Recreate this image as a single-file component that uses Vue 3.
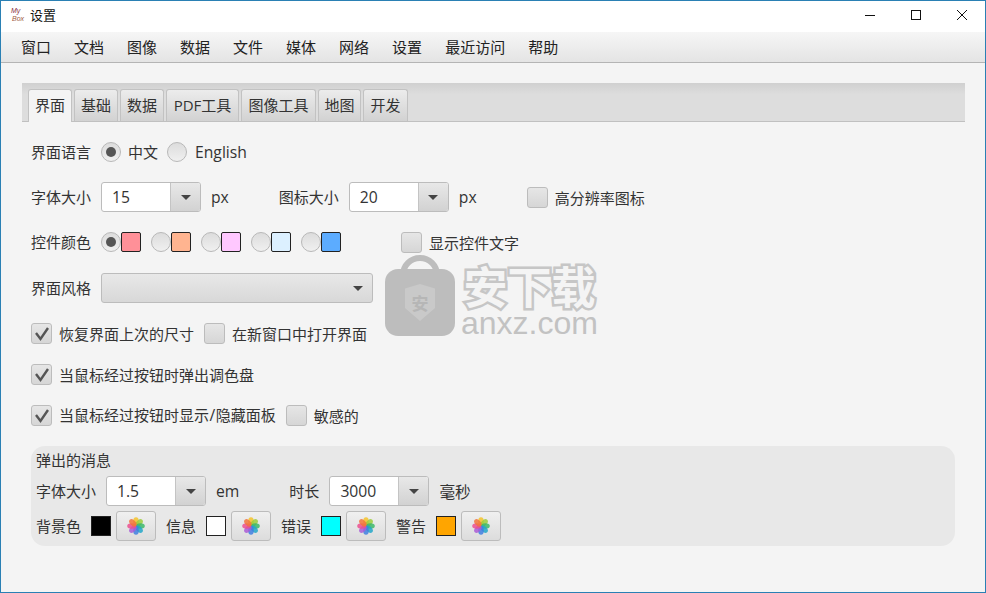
<template>
  <div class="window">
    <div class="titlebar">
      <div class="logo"><span>My</span><span class="logo-b">Box</span></div>
      <span class="title">设置</span>
      <div class="win-btns">
        <svg width="12" height="12" viewBox="0 0 12 12"><path d="M1 6.5h10" stroke="#111" fill="none" /></svg>
        <svg width="12" height="12" viewBox="0 0 12 12"><rect x="1.5" y="1.5" width="9" height="9" stroke="#111" fill="none" /></svg>
        <svg width="12" height="12" viewBox="0 0 12 12"><path d="M1 1l10 10M11 1L1 11" stroke="#111" fill="none" /></svg>
      </div>
    </div>

    <div class="menubar">
      <span v-for="m in menus" :key="m">{{ m }}</span>
    </div>

    <div class="body">
      <div class="tabs">
        <div v-for="(t, i) in tabs" :key="t" class="tab" :class="{ active: i === 0 }">{{ t }}</div>
      </div>

      <div class="content">
        <div class="row">
          <span class="lbl">界面语言</span>
          <span class="radio on"></span><span class="rtext">中文</span>
          <span class="radio"></span><span class="rtext latin">English</span>
        </div>

        <div class="row">
          <span class="lbl">字体大小</span>
          <div class="combo"><span class="val">15</span><span class="arrow"><i></i></span></div>
          <span class="unit">px</span>
          <span class="lbl second">图标大小</span>
          <div class="combo"><span class="val">20</span><span class="arrow"><i></i></span></div>
          <span class="unit">px</span>
          <span class="check hires"></span><span class="ctext">高分辨率图标</span>
        </div>

        <div class="row style-gap">
          <span class="lbl">控件颜色</span>
          <div v-for="(c, i) in colors" :key="c" class="color-opt">
            <span class="radio" :class="{ on: i === 0 }"></span>
            <span class="swatch" :style="{ background: c }"></span>
          </div>
          <span class="check show-text"></span><span class="ctext">显示控件文字</span>
        </div>

        <div class="row">
          <span class="lbl">界面风格</span>
          <div class="select"><i></i></div>
        </div>

        <div class="row tight">
          <span class="check"><svg viewBox="1 1 19 19"><path d="M5 10l4.5 6L17 5" /></svg></span>
          <span class="ctext">恢复界面上次的尺寸</span>
          <span class="check"></span><span class="ctext">在新窗口中打开界面</span>
        </div>

        <div class="row tight">
          <span class="check"><svg viewBox="1 1 19 19"><path d="M5 10l4.5 6L17 5" /></svg></span>
          <span class="ctext">当鼠标经过按钮时弹出调色盘</span>
        </div>

        <div class="row tight">
          <span class="check"><svg viewBox="1 1 19 19"><path d="M5 10l4.5 6L17 5" /></svg></span>
          <span class="ctext">当鼠标经过按钮时显示<span class="latin slash">/</span>隐藏面板</span>
          <span class="check"></span><span class="ctext">敏感的</span>
        </div>

        <div class="panel">
          <div class="panel-title">弹出的消息</div>
          <div class="panel-row">
            <span class="lbl">字体大小</span>
            <div class="combo"><span class="val">1.5</span><span class="arrow"><i></i></span></div>
            <span class="unit">em</span>
            <span class="lbl duration">时长</span>
            <div class="combo"><span class="val">3000</span><span class="arrow"><i></i></span></div>
            <span class="unit">毫秒</span>
          </div>
          <div class="panel-row">
            <template v-for="m in messages" :key="m.name">
              <span class="lbl">{{ m.name }}</span>
              <span class="msg-color" :style="{ background: m.color }"></span>
              <button class="pick">
                <svg width="18" height="18" viewBox="0 0 18 18">
                  <ellipse v-for="(p, i) in petals" :key="p" cx="9" cy="4.6" rx="2.8" ry="4.4"
                    :fill="p" fill-opacity="0.85" :transform="`rotate(${i * 45} 9 9)`" />
                </svg>
              </button>
            </template>
          </div>
        </div>
      </div>

      <div class="mark">
        <div class="bag">
          <span class="handle"></span>
          <span class="bag-body">
            <span class="shield">安</span>
          </span>
        </div>
        <div class="mark-text">
          <div class="mark-cn">安下载</div>
          <div class="mark-en">anxz.com</div>
        </div>
      </div>
    </div>
  </div>
</template>

<script setup>
const menus = ['窗口', '文档', '图像', '数据', '文件', '媒体', '网络', '设置', '最近访问', '帮助']
const tabs = ['界面', '基础', '数据', 'PDF工具', '图像工具', '地图', '开发']
const colors = ['#ff9098', '#ffb490', '#ffc8ff', '#dcf0ff', '#5cacff']
const messages = [
  { name: '背景色', color: '#000000' },
  { name: '信息', color: '#ffffff' },
  { name: '错误', color: '#00ffff' },
  { name: '警告', color: '#ffa500' }
]
const petals = ['#f5c32c', '#9ccc3c', '#3db86a', '#22a7c9', '#3f7fe0', '#a95cd6', '#ec4f8f', '#f2763a']
</script>

<style>
html, body {
  margin: 0;
  overflow: hidden;
}
</style>

<style scoped>
.window {
  position: relative;
  box-sizing: border-box;
  width: 986px;
  height: 593px;
  border: 1px solid #2a80b4;
  background: #f4f4f4;
  font-family: "Open Sans", "Noto Sans CJK SC", sans-serif;
  font-size: 15px;
  color: #333;
  overflow: hidden;
}

.titlebar {
  display: flex;
  align-items: center;
  box-sizing: border-box;
  height: 31px;
  padding: 0 0 4px 10px;
  background: #fff;
}

.logo {
  display: flex;
  flex-direction: column;
  width: 15px;
  font-family: "Liberation Sans", sans-serif;
  font-style: italic;
  font-size: 7px;
  line-height: 8px;
  color: #8a3040;
}

.logo-b {
  margin-left: 1px;
  color: #a05a40;
}

.title {
  margin-left: 4px;
  font-size: 13px;
  color: #111;
}

.win-btns {
  display: flex;
  align-items: center;
  gap: 34px;
  margin-left: auto;
  margin-right: 17px;
}

.win-btns svg {
  display: block;
}

.menubar {
  display: flex;
  align-items: center;
  gap: 23px;
  box-sizing: border-box;
  height: 31px;
  padding: 0 0 2px 20px;
  background: linear-gradient(#f6f6f6, #e4e4e4);
  border-bottom: 1px solid #b4b4b4;
  color: #222;
}

.body {
  padding: 20px 20px 0 21px;
}

.tabs {
  display: grid;
  grid-template-columns: 44px 44px 44px 73px 75px 43px 45px;
  align-items: end;
  gap: 2px;
  box-sizing: border-box;
  height: 39px;
  padding-left: 6px;
  background: linear-gradient(#d0d0d0, #dddddd 30%);
  border-bottom: 1px solid #c0c0c0;
}

.tab {
  box-sizing: border-box;
  height: 32px;
  line-height: 31px;
  text-align: center;
  border: 1px solid #c2c2c2;
  border-bottom: none;
  border-radius: 3px 3px 0 0;
  background: linear-gradient(#ececec, #d2d2d2);
  white-space: nowrap;
}

.tab.active {
  height: 33px;
  margin-bottom: -1px;
  background: #f4f4f4;
}

.content {
  padding: 15px 10px 0 9px;
}

.row {
  display: flex;
  align-items: center;
  height: 30px;
  margin-bottom: 15px;
}

.row.style-gap {
  margin-bottom: 16px;
}

.row.tight {
  margin-bottom: 11px;
}

.lbl,
.rtext {
  padding-bottom: 2px;
}

.lbl {
  margin-right: 10px;
  white-space: nowrap;
}

.latin {
  font-size: 15.7px;
}

.slash {
  padding: 0 0.5px;
}

.radio {
  position: relative;
  box-sizing: border-box;
  flex: none;
  width: 20px;
  height: 20px;
  border: 1px solid #b8b8b8;
  border-radius: 50%;
  background: linear-gradient(#dcdcdc, #f0f0f0);
}

.radio.on::after {
  content: "";
  position: absolute;
  top: 4px;
  left: 4px;
  width: 10px;
  height: 10px;
  border-radius: 50%;
  background: #555;
}

.rtext {
  margin: 0 9px 0 7px;
}

.rtext.latin {
  margin-left: 8px;
  padding-bottom: 0;
}

.combo {
  display: flex;
  box-sizing: border-box;
  width: 100px;
  height: 30px;
  border: 1px solid #bcbcbc;
  border-radius: 3px;
  background: #fff;
}

.val {
  flex: 1;
  padding-left: 10px;
  font-size: 15.7px;
  line-height: 28px;
}

.arrow {
  display: flex;
  align-items: center;
  justify-content: center;
  width: 29px;
  border-left: 1px solid #c4c4c4;
  border-radius: 0 2px 2px 0;
  background: linear-gradient(#e8e8e8, #d2d2d2);
}

.arrow i,
.select i {
  width: 0;
  height: 0;
  border-left: 5px solid transparent;
  border-right: 5px solid transparent;
  border-top: 5px solid #444;
}

.unit {
  margin-left: 10px;
  font-size: 15.7px;
}

.lbl.second {
  margin-left: 50px;
}

.check {
  display: flex;
  box-sizing: border-box;
  flex: none;
  width: 21px;
  height: 21px;
  border: 1px solid #bcbcbc;
  border-radius: 3px;
  background: linear-gradient(#e6e6e6, #d6d6d6);
}

.check svg {
  width: 19px;
  height: 19px;
}

.check path {
  fill: none;
  stroke: #555;
  stroke-width: 2.4;
}

.check.hires {
  margin-left: 50px;
}

.check.show-text {
  margin-left: 50px;
}

.ctext {
  margin: 0 10px 0 7px;
  white-space: nowrap;
}

.color-opt {
  display: flex;
  align-items: center;
  margin-right: 10px;
}

.swatch {
  box-sizing: border-box;
  width: 20px;
  height: 20px;
  border: 1px solid #222;
  border-radius: 2px;
}

.select {
  display: flex;
  align-items: center;
  justify-content: flex-end;
  box-sizing: border-box;
  width: 272px;
  height: 30px;
  padding-right: 9px;
  border: 1px solid #bcbcbc;
  border-radius: 3px;
  background: linear-gradient(#e8e8e8, #d8d8d8);
}

.panel {
  box-sizing: border-box;
  width: 924px;
  height: 100px;
  margin-top: 16px;
  padding: 5px 5px 0;
  border-radius: 14px;
  background: #e8e8e8;
}

.panel-title {
  height: 20px;
  line-height: 18px;
  white-space: nowrap;
}

.panel-row {
  display: flex;
  align-items: center;
  height: 30px;
  margin-top: 5px;
}

.lbl.duration {
  margin-left: 50px;
}

.msg-color {
  box-sizing: border-box;
  width: 20px;
  height: 20px;
  border: 1px solid #222;
}

.pick {
  display: flex;
  align-items: center;
  justify-content: center;
  box-sizing: border-box;
  width: 40px;
  height: 30px;
  margin: 0 10px 0 5px;
  padding: 0;
  border: 1px solid #bcbcbc;
  border-radius: 3px;
  background: linear-gradient(#f0f0f0, #dcdcdc);
}

/* watermark sits over the form */
.mark {
  position: absolute;
  left: 384px;
  top: 254px;
  display: flex;
  pointer-events: none;
}

.bag {
  position: relative;
  width: 70px;
  height: 81px;
}

.handle {
  position: absolute;
  left: 15px;
  top: 0;
  box-sizing: border-box;
  width: 40px;
  height: 30px;
  border: 6px solid #bdbdbd;
  border-radius: 20px 20px 0 0;
}

.bag-body {
  position: absolute;
  left: 0;
  top: 14px;
  display: flex;
  align-items: center;
  justify-content: center;
  width: 70px;
  height: 67px;
  border-radius: 13px;
  background: #bdbdbd;
}

.shield {
  display: flex;
  align-items: center;
  justify-content: center;
  width: 30px;
  height: 37px;
  clip-path: polygon(0 12%, 50% 0, 100% 12%, 100% 65%, 50% 100%, 0 65%);
  background: #c9c9c9;
  color: #b6b6b6;
  font-size: 17px;
  font-weight: 700;
}

.mark-text {
  margin-left: 6px;
  text-align: center;
}

.mark-cn {
  height: 43px;
  margin-top: 11px;
  font-size: 44px;
  line-height: 43px;
  font-weight: 700;
  color: #f4f4f4;
  -webkit-text-stroke: 5px #c6c6c6;
  paint-order: stroke fill;
  white-space: nowrap;
}

.mark-en {
  font-family: "Liberation Sans", sans-serif;
  font-size: 32px;
  line-height: 28px;
  color: #c2c2c2;
}
</style>
